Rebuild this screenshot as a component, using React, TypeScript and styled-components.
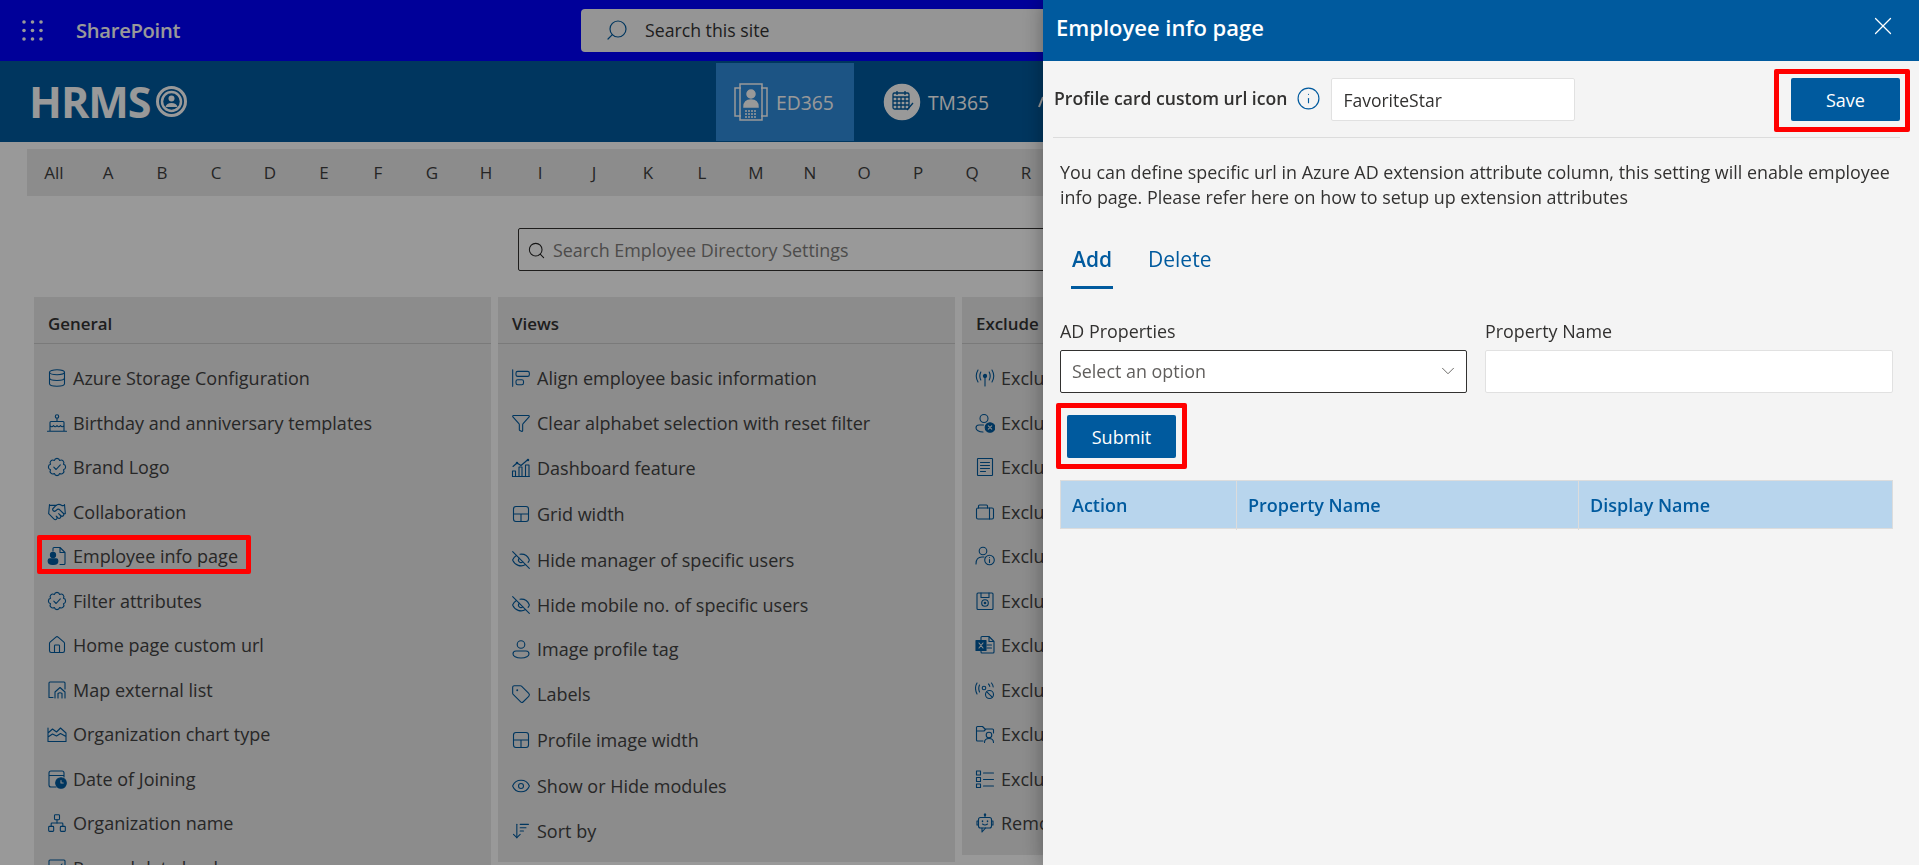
import React from 'react';
import styled, { createGlobalStyle } from 'styled-components';
import {
  AlignStartVertical, ArrowDownWideNarrow, ChevronDown, Database, Eye, EyeOff, Funnel,
  Handshake, House, Info, Network, Search, Tag, X,
} from 'lucide-react';

const FONT = `"Open Sans", "Noto Sans", "Liberation Sans", sans-serif`;

const Global = createGlobalStyle`
  html, body { margin: 0; padding: 0; height: 100%; overflow: hidden; background: #fff; }
  body { font-family: ${FONT}; font-size: 18px; color: #424242; }
  * { box-sizing: border-box; }
`;

const Svg = styled.svg`
  width: 20px;
  height: 20px;
  flex: none;
  fill: none;
  stroke: currentColor;
  stroke-width: 1.1;
  stroke-linecap: round;
  stroke-linejoin: round;
`;

type P = { children: React.ReactNode };
const S = ({ children }: P) => <Svg viewBox="0 0 20 20">{children}</Svg>;
const L = (I: React.ComponentType<{ size?: number; strokeWidth?: number }>) => () => <I size={20} strokeWidth={1.3} />;

const rosette = (() => {
  const n = 8;
  const r = 7;
  let d = '';
  for (let i = 0; i <= n; i++) {
    const a = (i / n) * Math.PI * 2 - Math.PI / 2 + Math.PI / 8;
    const x = (10 + r * Math.cos(a)).toFixed(2);
    const y = (10 + r * Math.sin(a)).toFixed(2);
    d += i === 0 ? `M${x} ${y}` : `A2.75 2.75 0 0 1 ${x} ${y}`;
  }
  return d;
})();

const Icons = {
  db: L(Database),
  shake: L(Handshake),
  home: L(House),
  net: L(Network),
  funnel: L(Funnel),
  eyeoff: L(EyeOff),
  tag: L(Tag),
  eye: L(Eye),
  sort: L(ArrowDownWideNarrow),
  align: L(AlignStartVertical),
  badge: () => (
    <S>
      <path d={rosette} />
      <path d="M6.800 10.200l2.300 2.300 4.200-4.700" />
    </S>
  ),
  cake: () => (
    <S>
      <circle cx="10" cy="3.500" r="1.700" />
      <path d="M10 5.500V8M3 18V9.500q0-1 1-1h12q1 0 1 1V18M3 12.500q1.800 2.600 3.500 0q1.800 2.600 3.500 0q1.800 2.600 3.500 0q1.800 2.600 3.500 0M.5 18.200h19" />
    </S>
  ),
  empdoc: () => (
    <S>
      <path d="M6 5V2.500q0-1 1-1h6l5 5v11q0 1-1 1h-4M13 1.500V6.500h5" />
      <circle cx="6" cy="9" r="2.600" fill="currentColor" />
      <path d="M1.200 14.500q0-1.600 1.600-1.600h6.400q1.600 0 1.600 1.600v1q0 3-4.800 3t-4.800-3z" fill="currentColor" />
    </S>
  ),
  mapList: () => (
    <S>
      <path d="M2 17.500V3q0-1 1-1h14q1 0 1 1v6M2 17.500h4" />
      <path d="M8 18v-6l5-4.500 5 4.500v6M11 18v-4.500M15 18v-4.500q-2-1.500-4 0" />
    </S>
  ),
  area: () => (
    <S>
      <path d="M1 17.500h18M1 17.500V4M1 9l4.500-4 4 3 4-4 5.500 5v8.500M1 13l4.500-3 4 2 4-2.500 5.500 3" />
    </S>
  ),
  dateclock: () => (
    <S>
      <path d="M9 18H4q-2 0-2-2V4q0-2 2-2h11q2 0 2 2v4M2 6.500h15" />
      <circle cx="14" cy="14" r="5.300" fill="currentColor" />
      <path d="M14 11.500V14h2.200" stroke="#e9e9e9" />
    </S>
  ),
  checkbox: () => (
    <S>
      <rect x="2" y="2" width="16" height="16" rx="1" />
      <path d="M6 11l3 3 6-8" />
    </S>
  ),
  grid: () => (
    <S>
      <rect x="2.500" y="2.500" width="15" height="15" rx="2.500" />
      <path d="M2.500 10h15M10 10v7.500" />
    </S>
  ),
  bars: () => (
    <S>
      <path d="M1.500 18.500V13h3v5.500zM8 18.500V9h3v9.500zM14.500 18.500V7h3.500v11.500zM1.500 18.500h17" />
      <path d="M2 8.500l4-3.500 4 2.500 7-6" />
      <circle cx="6" cy="5" r=".7" fill="currentColor" />
      <circle cx="17" cy="2" r=".7" fill="currentColor" />
    </S>
  ),
  person: () => (
    <S>
      <circle cx="10" cy="5.500" r="3.800" />
      <path d="M2 15q0-3 3-3h10q3 0 3 3c0 2-3 4-8 4s-8-2-8-4z" />
    </S>
  ),
  antenna: () => (
    <S>
      <circle cx="10" cy="8" r="1.600" fill="currentColor" />
      <path d="M10 9.500V18M5.800 12q-2-4 0-8M14.200 12q2-4 0-8M3 14q-3.500-6 0-12M17 14q3.500-6 0-12" />
    </S>
  ),
  userx: () => (
    <S>
      <circle cx="9" cy="5.500" r="4" />
      <path d="M8.500 12H4q-3 0-3 3c0 2 3 4 7 4" />
      <circle cx="15" cy="14.500" r="4.800" fill="currentColor" />
      <path d="M13.300 12.800l3.400 3.400M16.700 12.800l-3.400 3.400" stroke="#e9e9e9" />
    </S>
  ),
  form: () => (
    <S>
      <rect x="2.500" y="1.500" width="15" height="17" rx=".6" />
      <path d="M5.500 5.500h9M5.500 8.500h9M5.500 11.500h9M5.500 14.500h5" />
    </S>
  ),
  case: () => (
    <S>
      <rect x="1.500" y="6" width="17" height="11" rx="1.500" />
      <path d="M12.500 6V4q0-1-1-1h-7q-1 0-1 1v2M14.500 6v11" />
    </S>
  ),
  userinfo: () => (
    <S>
      <circle cx="8" cy="5" r="3.800" />
      <path d="M1 18q0-7 6-7h2" />
      <circle cx="14.500" cy="14" r="4.800" />
      <path d="M14.500 13.500v3M14.500 11.500v.1" />
    </S>
  ),
  save: () => (
    <S>
      <rect x="2" y="2" width="16" height="16.500" rx="1" />
      <path d="M6 2v4.500h8V2" />
      <circle cx="10" cy="12" r="3.300" />
      <circle cx="10" cy="12" r=".8" fill="currentColor" />
    </S>
  ),
  excel: () => (
    <S>
      <path d="M6 5V2.500q0-1 1-1h7l5 5V17q0 1-1 1H7q-1 0-1-1v-1.500M14 1.500v5h5M12 10h4.500M12 13h4.500" />
      <rect x="1" y="5.500" width="10" height="10" fill="currentColor" />
      <path d="M4 8l4 5M8 8l-4 5" stroke="#e9e9e9" />
    </S>
  ),
  wifix: () => (
    <S>
      <circle cx="9" cy="8" r="1.800" />
      <path d="M4.500 12q-1.500-4 0-7M2 14q-3-6 0-11M13.500 4q1 1 1.300 2.500M16.500 3q1.500 2 1.700 4" />
      <circle cx="14.500" cy="14.500" r="4" />
      <path d="M11.800 11.800l5.400 5.400" />
    </S>
  ),
  folderuser: () => (
    <S>
      <path d="M8 17H2.500q-1 0-1-1V3.500q0-1 1-1h5l2.500 2.500h7.500q1 0 1 1v3M1.500 7h7.500l2-2" />
      <circle cx="14" cy="11" r="2.800" />
      <path d="M9.500 18.500q0-4 4.500-4t4.500 4" />
    </S>
  ),
  list: () => (
    <S>
      <rect x="1.500" y="2" width="4" height="4" />
      <rect x="1.500" y="8.500" width="4" height="4" />
      <rect x="1.500" y="15" width="4" height="3.500" />
      <path d="M8.500 4h10M8.500 10.500h10M8.500 17h10" />
    </S>
  ),
  bot: () => (
    <S>
      <path d="M10 1v3.500" />
      <circle cx="10" cy="1.800" r=".7" fill="currentColor" />
      <rect x="3.500" y="4.500" width="13" height="10.500" rx="2" />
      <path d="M3.500 8H2v4h1.500M16.500 8H18v4h-1.500M7 15v4l3.500-4M7.500 11q2.500 2 5 0" />
      <path d="M7.500 8v.4M12.500 8v.4" strokeWidth="1.500" />
    </S>
  ),
};
type IconName = keyof typeof Icons;

type Item = { icon: IconName; label: string; mt?: number; flagged?: boolean };

const generalItems: Item[] = [
  { icon: 'db', label: 'Azure Storage Configuration' },
  { icon: 'cake', label: 'Birthday and anniversary templates' },
  { icon: 'badge', label: 'Brand Logo' },
  { icon: 'shake', label: 'Collaboration' },
  { icon: 'empdoc', label: 'Employee info page', flagged: true },
  { icon: 'badge', label: 'Filter attributes' },
  { icon: 'home', label: 'Home page custom url' },
  { icon: 'mapList', label: 'Map external list' },
  { icon: 'area', label: 'Organization chart type' },
  { icon: 'dateclock', label: 'Date of Joining' },
  { icon: 'net', label: 'Organization name' },
  { icon: 'checkbox', label: 'Resend data load' },
];
const viewItems: Item[] = [
  { icon: 'align', label: 'Align employee basic information' },
  { icon: 'funnel', label: 'Clear alphabet selection with reset filter' },
  { icon: 'bars', label: 'Dashboard feature', mt: 0.5 },
  { icon: 'grid', label: 'Grid width', mt: 1.5 },
  { icon: 'eyeoff', label: 'Hide manager of specific users', mt: 1.5 },
  { icon: 'eyeoff', label: 'Hide mobile no. of specific users', mt: 0.5 },
  { icon: 'person', label: 'Image profile tag' },
  { icon: 'tag', label: 'Labels' },
  { icon: 'grid', label: 'Profile image width', mt: 1.5 },
  { icon: 'eye', label: 'Show or Hide modules', mt: 2 },
  { icon: 'sort', label: 'Sort by' },
];
const excludeItems: Item[] = [
  { icon: 'antenna', label: 'Exclude users' },
  { icon: 'userx', label: 'Exclude inactive users' },
  { icon: 'form', label: 'Exclude forms' },
  { icon: 'case', label: 'Exclude departments' },
  { icon: 'userinfo', label: 'Exclude user information' },
  { icon: 'save', label: 'Exclude saved views' },
  { icon: 'excel', label: 'Exclude Excel export' },
  { icon: 'wifix', label: 'Exclude presence' },
  { icon: 'folderuser', label: 'Exclude user folders' },
  { icon: 'list', label: 'Exclude list items' },
  { icon: 'bot', label: 'Remove bot accounts' },
];

const Page = styled.div`
  width: 1919px;
  height: 865px;
  overflow: hidden;
`;
const SuiteBar = styled.header`
  height: 61px;
  background: #0000ff;
  color: #fff;
  display: flex;
  align-items: center;
`;
const Waffle = styled.div`
  width: 76px;
  padding-left: 21px;
  display: flex;
`;
const Brand = styled.span`
  width: 505px;
  font-size: 20.2px;
  font-weight: 600;
  letter-spacing: -0.3px;
  margin-top: -2px;
`;
const SiteSearch = styled.div`
  width: 757px;
  height: 43px;
  background: #f9f9f9;
  border-radius: 4px;
  padding: 0 0 2px 24px;
  display: flex;
  align-items: center;
  gap: 16px;
  color: #333;
  font-size: 17.7px;
  svg { transform: scaleX(-1); color: #005a9e; }
`;
const AppHeader = styled.div`
  height: 81px;
  background: #005a9e;
  display: flex;
  align-items: center;
  color: #fff;
`;
const Logo = styled.div`
  width: 716px;
  padding-left: 29px;
  display: flex;
  align-items: center;
  gap: 5px;
  font-size: 43px;
  font-weight: 700;
  letter-spacing: -1px;
`;
const NavTab = styled.div<{ $active?: boolean }>`
  height: 78px;
  margin-top: 1px;
  width: ${(p) => (p.$active ? '138px' : 'auto')};
  padding: ${(p) => (p.$active ? '0 0 0 17px' : '0 0 0 29px')};
  background: ${(p) => (p.$active ? '#308cdd' : 'transparent')};
  display: flex;
  align-items: center;
  gap: 7px;
  font-size: 19.3px;
  color: #fff;
`;
const TabGap = styled.div`
  width: 16px;
`;
const NavIcon = styled.svg`
  height: 40px;
  flex: none;
  fill: none;
  stroke: #fff;
  stroke-width: 1.5;
`;
const AlphaBar = styled.nav`
  margin: 7px 0 0 27px;
  height: 47px;
  background: #e9e9e9;
  display: flex;
`;
const Letter = styled.span`
  width: 54px;
  text-align: center;
  line-height: 47px;
  font-size: 17px;
  color: #3f3f3f;
`;
const SettingsSearch = styled.div`
  margin: 32px 0 0 518px;
  width: 880px;
  height: 43px;
  border: 1px solid #323130;
  border-radius: 2px;
  display: flex;
  align-items: center;
  gap: 7px;
  padding-left: 8px;
  color: #807e7c;
  font-size: 17.9px;
  svg { transform: translateY(1px); color: #222; }
`;
const Columns = styled.div`
  margin: 26px 0 0 34px;
  display: grid;
  grid-template-columns: repeat(3, 457px);
  gap: 7px;
  align-items: start;
`;
const Card = styled.section`
  background: #e9e9e9;
  padding-bottom: 9px;
`;
const CardTitle = styled.h2`
  margin: 0;
  height: 47px;
  line-height: 54px;
  padding-left: 14px;
  border-bottom: 1px solid #ccc;
  font-size: 16.9px;
  font-weight: 600;
  color: #333;
`;
const List = styled.ul`
  margin: 0;
  padding: 12px 0 0 13px;
  list-style: none;
`;
const Row = styled.li<{ $mt: number }>`
  height: 44.5px;
  margin-top: ${(p) => p.$mt}px;
  display: flex;
  align-items: center;
`;
const RowBody = styled.span<{ $flagged?: boolean }>`
  position: relative;
  display: inline-flex;
  align-items: center;
  gap: 6px;
  white-space: nowrap;
  svg { color: #005a9e; }
  ${(p) =>
    p.$flagged &&
    `&::after {
      content: '';
      position: absolute;
      z-index: 2;
      inset: -9px -13px -6px -10px;
      border: 5px solid #ff0000;
      border-radius: 2px;
    }`}
`;
const Scrim = styled.div`
  position: fixed;
  inset: 0;
  z-index: 1;
  background: rgba(0, 0, 0, 0.4);
`;
const Panel = styled.aside`
  position: fixed;
  z-index: 3;
  top: 0;
  bottom: 0;
  left: 1043px;
  right: 0;
  background: #f4f4f4;
  box-shadow: 0 0 20px rgba(0, 0, 0, 0.35);
  color: #323130;
`;
const PanelHead = styled.div`
  height: 61px;
  background: #005a9e;
  color: #fff;
  display: flex;
  align-items: center;
  justify-content: space-between;
  padding: 0 21px 7px 13px;
`;
const PanelTitle = styled.h1`
  margin: 0;
  font-size: 22px;
  font-weight: 600;
`;
const CloseBtn = styled.span`
  display: flex;
  margin-top: -3px;
`;
const UrlRow = styled.div`
  margin: 0 19px 0 10px;
  padding: 17px 0 16px 1px;
  border-bottom: 1px solid #dcdcdc;
  display: flex;
  align-items: center;
`;
const StrongLabel = styled.span`
  font-weight: 600;
  font-size: 17.6px;
  margin-top: -3px;
  white-space: nowrap;
`;
const InfoMark = styled.span`
  display: flex;
  margin: -3px 10px 0 9px;
  color: #005a9e;
`;
const TextBox = styled.div<{ $w?: string }>`
  width: ${(p) => p.$w ?? '100%'};
  height: 43px;
  background: #fff;
  border: 1px solid #e1e1e1;
  border-radius: 2px;
  padding: 0 11px;
  line-height: 43px;
  font-size: 17.5px;
`;
const Flag = styled.div<{ $auto?: boolean; $inset: string }>`
  position: relative;
  margin-left: ${(p) => (p.$auto ? 'auto' : '0')};
  width: fit-content;
  &::after {
    content: '';
    position: absolute;
    inset: ${(p) => p.$inset};
    border: 5px solid #ff0000;
    border-radius: 2px;
  }
`;
const PrimaryBtn = styled.div`
  width: 109px;
  height: 43px;
  background: #005a9e;
  border-radius: 2px;
  color: #fff;
  font-size: 18px;
  line-height: 45px;
  text-align: center;
`;
const Body = styled.div`
  padding: 22px 26px 0 17px;
`;
const Note = styled.p`
  margin: 0;
  font-size: 17.9px;
  line-height: 25px;
  white-space: nowrap;
`;
const Tabs = styled.div`
  margin: 28px 0 0 11px;
  display: flex;
  gap: 35px;
`;
const TabItem = styled.span<{ $on?: boolean }>`
  height: 51px;
  padding: ${(p) => (p.$on ? '8px 1px 0' : '8px 0 0')};
  font-size: 21px;
  line-height: 26px;
  color: #005a9e;
  font-weight: ${(p) => (p.$on ? 600 : 400)};
  border-bottom: 3px solid ${(p) => (p.$on ? '#005a9e' : 'transparent')};
`;
const FormGrid = styled.div`
  margin-top: 31px;
  display: grid;
  grid-template-columns: 407px 408px;
  gap: 18px;
`;
const Field = styled.div`
  display: flex;
  flex-direction: column;
  gap: 8px;
  font-size: 17.9px;
  line-height: 22px;
`;
const SelectBox = styled.div`
  height: 43px;
  background: #fff;
  border: 1px solid #323130;
  border-radius: 2px;
  display: flex;
  align-items: center;
  justify-content: space-between;
  padding: 0 7px 2px 11px;
  color: #605e5c;
  svg { color: #605e5c; }
`;
const SubmitRow = styled.div`
  margin: 22px 0 0 7px;
`;
const Table = styled.div`
  margin-top: 22px;
  height: 49px;
  display: grid;
  grid-template-columns: 175px 342px 316px;
  background: #b8d5ed;
  border: 1px solid #dcdcdc;
`;
const Th = styled.div`
  padding-left: 11px;
  line-height: 49px;
  font-size: 18px;
  font-weight: 600;
  color: #005a9e;
  & + & { border-left: 1px solid #dcdcdc; }
`;

const Card3 = ({ title, items }: { title: string; items: Item[] }) => (
  <Card>
    <CardTitle>{title}</CardTitle>
    <List>
      {items.map((it, i) => {
        const I = Icons[it.icon];
        return (
          <Row key={i} $mt={it.mt ?? 0}>
            <RowBody $flagged={it.flagged}>
              <I />
              {it.label}
            </RowBody>
          </Row>
        );
      })}
    </List>
  </Card>
);

const letters = ['All', ...'ABCDEFGHIJKLMNOPQR'.split('')];
const waffleDots = [3, 11.5, 20].flatMap((y) => [3, 11.5, 20].map((x) => ({ x, y })));

export default function App() {
  return (
    <>
      <Global />
      <Page>
        <SuiteBar>
          <Waffle>
            <svg width="23" height="23" viewBox="0 0 23 23" fill="#fff">
              {waffleDots.map((d) => <circle key={`${d.x}-${d.y}`} cx={d.x} cy={d.y} r="1.800" />)}
            </svg>
          </Waffle>
          <Brand>SharePoint</Brand>
          <SiteSearch><Search size={24} strokeWidth={1.2} />Search this site</SiteSearch>
        </SuiteBar>
        <AppHeader>
          <Logo>
            HRMS
            <svg width="31" height="31" viewBox="0 0 31 31" fill="none">
              <circle cx="15.500" cy="15.500" r="14" stroke="#fff" strokeWidth="3" />
              <circle cx="15.500" cy="15.500" r="9.500" stroke="#fff" strokeWidth="2.500" />
              <circle cx="15.500" cy="12.500" r="3" fill="#fff" />
              <path d="M9.500 21q1-4 6-4t6 4z" fill="#fff" />
            </svg>
          </Logo>
          <NavTab $active>
            <NavIcon viewBox="0 0 36 40" width="36">
              <path d="M8 6H2v28h6M28 6h6v28h-6" />
              <rect x="7" y="2" width="22" height="36" />
              <circle cx="18" cy="12" r="4" fill="#fff" />
              <path d="M11 25q0-7 7-7t7 7z" fill="#fff" />
              <path d="M12 29h12M12 32h12M12 35h12" strokeDasharray="2 1" />
            </NavIcon>
            ED365
          </NavTab>
          <NavTab>
            <NavIcon viewBox="0 0 38 40" width="38">
              <circle cx="19" cy="20" r="17.500" fill="#fff" />
              <g stroke="#005a9e" strokeWidth="1.300">
                <rect x="10" y="11" width="16" height="16" rx="1.500" />
                <path d="M10 15h16M14 9v4M22 9v4M10 19h16M10 23h16M14 15v12M18 15v12M22 15v12M24 28l6-7" />
              </g>
            </NavIcon>
            TM365
          </NavTab>
          <TabGap />
          <NavTab>
            <NavIcon viewBox="0 0 36 40" width="36"><path d="M5 25L9 15" strokeWidth="2" /></NavIcon>
          </NavTab>
        </AppHeader>
        <AlphaBar>
          {letters.map((l) => <Letter key={l}>{l}</Letter>)}
        </AlphaBar>
        <SettingsSearch><Search size={19} strokeWidth={1.3} />Search Employee Directory Settings</SettingsSearch>
        <Columns>
          <Card3 title="General" items={generalItems} />
          <Card3 title="Views" items={viewItems} />
          <Card3 title="Exclude" items={excludeItems} />
        </Columns>
      </Page>
      <Scrim />
      <Panel>
        <PanelHead>
          <PanelTitle>Employee info page</PanelTitle>
          <CloseBtn><X size={30} strokeWidth={1} /></CloseBtn>
        </PanelHead>
        <UrlRow>
          <StrongLabel>Profile card custom url icon</StrongLabel>
          <InfoMark><Info size={25} strokeWidth={1.1} /></InfoMark>
          <TextBox $w="244px">FavoriteStar</TextBox>
          <Flag $auto $inset="-9px -10px -11px -17px"><PrimaryBtn>Save</PrimaryBtn></Flag>
        </UrlRow>
        <Body>
          <Note>
            You can define specific url in Azure AD extension attribute column, this setting will enable employee<br />
            info page. Please refer here on how to setup up extension attributes
          </Note>
          <Tabs>
            <TabItem $on>Add</TabItem>
            <TabItem>Delete</TabItem>
          </Tabs>
          <FormGrid>
            <Field>
              AD Properties
              <SelectBox>Select an option<ChevronDown size={22} strokeWidth={1} /></SelectBox>
            </Field>
            <Field>
              Property Name
              <TextBox />
            </Field>
          </FormGrid>
          <SubmitRow>
            <Flag $inset="-12px -11px -11px -11px"><PrimaryBtn>Submit</PrimaryBtn></Flag>
          </SubmitRow>
          <Table>
            <Th>Action</Th>
            <Th>Property Name</Th>
            <Th>Display Name</Th>
          </Table>
        </Body>
      </Panel>
    </>
  );
}
